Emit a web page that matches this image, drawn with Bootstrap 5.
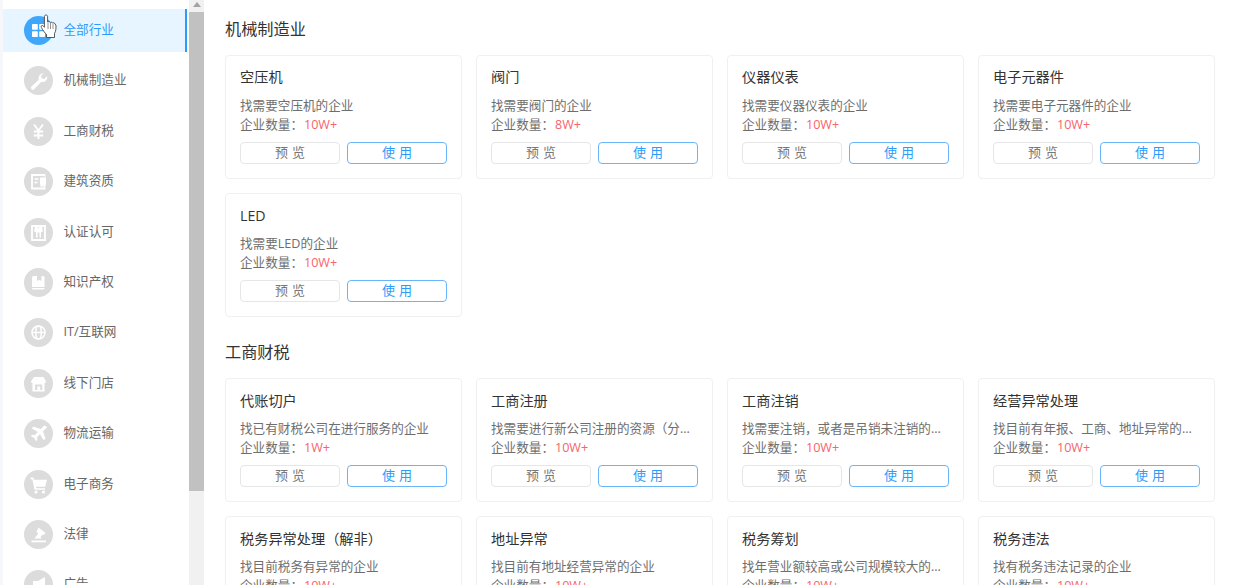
<!DOCTYPE html>
<html lang="zh"><head><meta charset="utf-8"><title>行业</title>
<link href="https://cdn.jsdelivr.net/npm/bootstrap@5.3.0/dist/css/bootstrap.min.css" rel="stylesheet">
<style>
html,body{height:585px;overflow:hidden;background:#fff;font-family:"Open Sans","Noto Sans CJK SC",sans-serif;color:#333}
.shell{height:585px;overflow:hidden;padding-left:3px;background:#f5f7fa}
.side{width:186px;height:585px;background:#fff;overflow:hidden;flex:none;padding-top:9px}
.side-list{width:184px}
.side-item{height:43px;margin-bottom:7.4px;padding-left:21px;gap:10.5px;font-size:12.6px;color:#666;border-right:2px solid transparent;flex:none}
.side-item.on{background:#e6f5ff;color:#2c9cfb;border-right-color:#2c9cfb}
.dot{width:29px;height:29px;border-radius:50%;background:#dcdcdc;flex:none}
.on .dot{background:#3fa7fb}
.dot svg{width:29px;height:29px;display:block}
.sbar{width:15px;height:585px;background:#f1f1f1;flex:none}
.sbar-up{height:12px;padding-top:2px}
.sbar-up i{display:block;width:0;height:0;margin:0 auto;border:4px solid transparent;border-top:0;border-bottom:5px solid #a3a3a3}
.sbar-thumb{height:479px;background:#c1c1c1}
.main{flex:1;padding:0 33px 0 21px;background:#fff;min-width:0;height:585px;overflow:hidden}
.sec-title{font-size:16.2px;line-height:24px;color:#333;font-weight:400;margin:0;padding:17px 0 14px}
.sec-title.next{padding:22.8px 0 14.2px}
.tpl-grid{display:grid;grid-template-columns:repeat(4,237px);gap:14.2px 14px}
.tpl{border:1px solid #f0f0f0;border-radius:4px;height:124px;padding:11.4px 14px 0}
.tpl-name{font-size:14.2px;line-height:20px;color:#333;margin-bottom:8.7px}
.tpl-desc{font-size:12.6px;line-height:19px;color:#6e6e6e;white-space:nowrap;overflow:hidden;text-overflow:ellipsis}
.num{color:#f9636b;margin-left:1px}
.tpl-btns{gap:7px;margin-top:8px}
.tpl-btns .btn{width:100px;height:22px;padding:0 0 1px;font-size:13px;line-height:19px;border-radius:4px;letter-spacing:4px;text-indent:4px}
.tpl-btns .btn-see{border:1px solid #e6e6e6;color:#777;background:#fff}
.tpl-btns .btn-use{border:1px solid #69b5f9;color:#2c9cfb;background:#fff}
.cursor{position:absolute;left:40px;top:14px;width:19px;height:25px}
</style></head><body>
<div class="shell d-flex position-relative">
<nav class="side">
<div class="side-list d-flex flex-column">
<div class="side-item on d-flex align-items-center"><span class="dot"><svg viewBox="0 0 29 29" fill="#fff"><rect x="8" y="8" width="5.800" height="5.800" rx=".8"/><rect x="15.200" y="8" width="5.800" height="5.800" rx=".8"/><rect x="8" y="15.200" width="5.800" height="5.800" rx=".8"/><rect x="15.200" y="15.200" width="5.800" height="5.800" rx=".8"/></svg></span>全部行业</div>
<div class="side-item d-flex align-items-center"><span class="dot"><svg viewBox="0 0 29 29" fill="#fff"><path d="M20 7.500a4.800 4.800 0 0 0-5.200 6.300L7.500 20.500a1.900 1.900 0 0 0 2.700 2.700l6.900-7.300a4.800 4.800 0 0 0 6-5.700l-2.800 2.800-2.700-.8-.7-2.700z"/></svg></span>机械制造业</div>
<div class="side-item d-flex align-items-center"><span class="dot"><svg viewBox="0 0 29 29" fill="none" stroke="#fff" stroke-width="1.900"><path d="M10 7.500l4.500 6 4.500-6M14.500 13.500V22M9.800 14.500h9.400M9.800 18.500h9.400"/></svg></span>工商财税</div>
<div class="side-item d-flex align-items-center"><span class="dot"><svg viewBox="0 0 29 29"><path d="M20.500 9.500V8H8v13.500h12.500V20" fill="none" stroke="#fff" stroke-width="1.800"/><path d="M10.500 12h4M10.500 15.500h3" stroke="#fff" stroke-width="1.500"/><path d="M16 10.500h6v6.500l-1 3.500-2-1.500-2 1.500-1-3.500z" fill="#fff"/></svg></span>建筑资质</div>
<div class="side-item d-flex align-items-center"><span class="dot"><svg viewBox="0 0 29 29"><path d="M8 8h13v14H8z" fill="none" stroke="#fff" stroke-width="1.800"/><path d="M11 8.500h2.200l1.300 1.800 1.300-1.800H18l1 5-2 .5v5.500h-1.500v-5h-2v5H12V14l-2-.5z" fill="#fff"/></svg></span>认证认可</div>
<div class="side-item d-flex align-items-center"><span class="dot"><svg viewBox="0 0 29 29" fill="#fff"><path d="M9.500 8h3.500v5l2.200-1.200L17.500 13V8h1.500a1.500 1.500 0 0 1 1.500 1.500V19H8V9.500A1.500 1.500 0 0 1 9.500 8z"/><rect x="8" y="20" width="12.500" height="1.500" rx=".7"/></svg></span>知识产权</div>
<div class="side-item d-flex align-items-center"><span class="dot"><svg viewBox="0 0 29 29" fill="none" stroke="#fff" stroke-width="1.500"><circle cx="14.500" cy="14.500" r="6.500"/><ellipse cx="14.500" cy="14.500" rx="2.800" ry="6.500"/><path d="M8 14.500h13"/></svg></span>IT/互联网</div>
<div class="side-item d-flex align-items-center"><span class="dot"><svg viewBox="0 0 29 29" fill="#fff"><path d="M10 8h9.500l2.500 4.500c0 1.200-1 1.500-1.500 1.500v8.500h-12V14c-.5 0-1.500-.3-1.500-1.500zM11 15.500v5.500h2.200v-3.500h3V21h2v-5.500z" fill-rule="evenodd"/></svg></span>线下门店</div>
<div class="side-item d-flex align-items-center"><span class="dot"><svg viewBox="0 0 29 29" fill="#fff"><path d="M21.800 7.200c1-.3 1.300.9.700 1.700L19 12.300l2.500 7.500-1.800 1.500-3.700-6-3 3 .4 2.700-1.300 1.300-1.900-3.400-3.400-1.900 1.300-1.300 2.700.4 3-3-6-3.700 1.500-1.800 7.500 2.500 3.400-3.500z"/></svg></span>物流运输</div>
<div class="side-item d-flex align-items-center"><span class="dot"><svg viewBox="0 0 29 29" fill="#fff"><path d="M6.500 7.500h3l.6 2.200H23l-1.800 7H12l.3 1.500H21v1.500H10.500L8.400 9.200H6.500z"/><circle cx="12" cy="22" r="1.600"/><circle cx="19.500" cy="22" r="1.600"/></svg></span>电子商务</div>
<div class="side-item d-flex align-items-center"><span class="dot"><svg viewBox="0 0 29 29" fill="#fff"><path d="M14.500 7.500l7 5.500-2 2.200-1-.7-2 2.500 1.300 1.500H10.200l4-4.700-1.600-1.800-.1-.1z"/><path d="M7.500 20.500h14.500v1.800H7.500z"/></svg></span>法律</div>
<div class="side-item d-flex align-items-center"><span class="dot"><svg viewBox="0 0 29 29" fill="#fff"><path d="M21 7v13l-7-3.500H9V11h5z"/></svg></span>广告</div>
</div>
</nav>
<div class="sbar"><div class="sbar-up"><i></i></div><div class="sbar-thumb"></div></div>
<main class="main">
<h2 class="sec-title">机械制造业</h2>
<div class="tpl-grid">
<div class="card tpl"><div class="tpl-name">空压机</div><div class="tpl-desc">找需要空压机的企业</div><div class="tpl-desc">企业数量：<span class="num">10W+</span></div><div class="tpl-btns d-flex"><button class="btn btn-see">预览</button><button class="btn btn-use">使用</button></div></div>
<div class="card tpl"><div class="tpl-name">阀门</div><div class="tpl-desc">找需要阀门的企业</div><div class="tpl-desc">企业数量：<span class="num">8W+</span></div><div class="tpl-btns d-flex"><button class="btn btn-see">预览</button><button class="btn btn-use">使用</button></div></div>
<div class="card tpl"><div class="tpl-name">仪器仪表</div><div class="tpl-desc">找需要仪器仪表的企业</div><div class="tpl-desc">企业数量：<span class="num">10W+</span></div><div class="tpl-btns d-flex"><button class="btn btn-see">预览</button><button class="btn btn-use">使用</button></div></div>
<div class="card tpl"><div class="tpl-name">电子元器件</div><div class="tpl-desc">找需要电子元器件的企业</div><div class="tpl-desc">企业数量：<span class="num">10W+</span></div><div class="tpl-btns d-flex"><button class="btn btn-see">预览</button><button class="btn btn-use">使用</button></div></div>
<div class="card tpl"><div class="tpl-name">LED</div><div class="tpl-desc">找需要LED的企业</div><div class="tpl-desc">企业数量：<span class="num">10W+</span></div><div class="tpl-btns d-flex"><button class="btn btn-see">预览</button><button class="btn btn-use">使用</button></div></div>
</div>
<h2 class="sec-title next">工商财税</h2>
<div class="tpl-grid">
<div class="card tpl"><div class="tpl-name">代账切户</div><div class="tpl-desc">找已有财税公司在进行服务的企业</div><div class="tpl-desc">企业数量：<span class="num">1W+</span></div><div class="tpl-btns d-flex"><button class="btn btn-see">预览</button><button class="btn btn-use">使用</button></div></div>
<div class="card tpl"><div class="tpl-name">工商注册</div><div class="tpl-desc">找需要进行新公司注册的资源（分...</div><div class="tpl-desc">企业数量：<span class="num">10W+</span></div><div class="tpl-btns d-flex"><button class="btn btn-see">预览</button><button class="btn btn-use">使用</button></div></div>
<div class="card tpl"><div class="tpl-name">工商注销</div><div class="tpl-desc">找需要注销，或者是吊销未注销的...</div><div class="tpl-desc">企业数量：<span class="num">10W+</span></div><div class="tpl-btns d-flex"><button class="btn btn-see">预览</button><button class="btn btn-use">使用</button></div></div>
<div class="card tpl"><div class="tpl-name">经营异常处理</div><div class="tpl-desc">找目前有年报、工商、地址异常的...</div><div class="tpl-desc">企业数量：<span class="num">10W+</span></div><div class="tpl-btns d-flex"><button class="btn btn-see">预览</button><button class="btn btn-use">使用</button></div></div>
<div class="card tpl"><div class="tpl-name">税务异常处理（解非）</div><div class="tpl-desc">找目前税务有异常的企业</div><div class="tpl-desc">企业数量：<span class="num">10W+</span></div><div class="tpl-btns d-flex"><button class="btn btn-see">预览</button><button class="btn btn-use">使用</button></div></div>
<div class="card tpl"><div class="tpl-name">地址异常</div><div class="tpl-desc">找目前有地址经营异常的企业</div><div class="tpl-desc">企业数量：<span class="num">10W+</span></div><div class="tpl-btns d-flex"><button class="btn btn-see">预览</button><button class="btn btn-use">使用</button></div></div>
<div class="card tpl"><div class="tpl-name">税务筹划</div><div class="tpl-desc">找年营业额较高或公司规模较大的...</div><div class="tpl-desc">企业数量：<span class="num">10W+</span></div><div class="tpl-btns d-flex"><button class="btn btn-see">预览</button><button class="btn btn-use">使用</button></div></div>
<div class="card tpl"><div class="tpl-name">税务违法</div><div class="tpl-desc">找有税务违法记录的企业</div><div class="tpl-desc">企业数量：<span class="num">10W+</span></div><div class="tpl-btns d-flex"><button class="btn btn-see">预览</button><button class="btn btn-use">使用</button></div></div>
</div>
</main>
<svg class="cursor" viewBox="0 0 19 25"><path d="M6 1c1 0 1.600.7 1.600 1.700V8l1.400-.4c.7 0 1.200.3 1.400.9.600-.5 1.900-.4 2.200.5.800-.5 2.200-.2 2.400 1l.9 1c.3 2.500.1 6-1.400 8.500v4H6.500v-3C5 19 3 16.500 1.400 13.500c-.5-1-.2-1.800.6-2 .7-.1 1.700.8 2.400 1.800V2.700C4.400 1.700 5 1 6 1z" fill="#fff" stroke="#444" stroke-width=".9"/><path d="M8 9v6M10.500 9v6M13 9.500V15" stroke="#777" stroke-width=".8"/></svg>
</div>
<script src="https://cdn.jsdelivr.net/npm/bootstrap@5.3.0/dist/js/bootstrap.bundle.min.js"></script>
</body></html>
